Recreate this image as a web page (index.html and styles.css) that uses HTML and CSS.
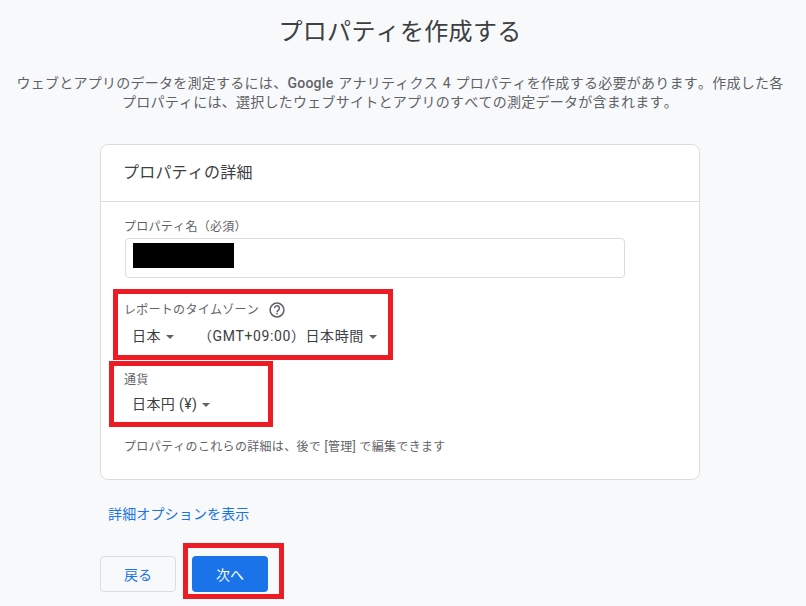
FILE: index.html
```html
<!DOCTYPE html>
<html lang="ja">
<head>
<meta charset="utf-8">
<title>プロパティを作成する</title>
<link rel="stylesheet" href="styles.css">
</head>
<body>
<main class="page">
  <h1 class="title">プロパティを作成する</h1>
  <p class="intro">ウェブとアプリのデータを測定するには、<span class="brand">Google</span> アナリティクス 4 プロパティを作成する必要があります。作成した各<br>プロパティには、選択したウェブサイトとアプリのすべての測定データが含まれます。</p>
  <section class="card">
    <h2 class="card-head">プロパティの詳細</h2>
    <div class="card-body">
      <div class="label label-name">プロパティ名（必須）</div>
      <div class="input"><span class="redact"></span></div>
      <div class="label label-tz">レポートのタイムゾーン
        <svg class="help" viewBox="0 0 24 24" width="18" height="18"><circle cx="12" cy="12" r="9.2" fill="none" stroke="#5f6368" stroke-width="2"/><path d="M8.8 9.6a3.2 3.2 0 1 1 5.2 2.5c-1.2.9-2 1.4-2 2.9" fill="none" stroke="#5f6368" stroke-width="2"/><rect x="11" y="16" width="2" height="2" fill="#5f6368"/></svg>
      </div>
      <div class="selects">
        <span class="select select-country">日本<i class="caret"></i></span>
        <span class="select select-zone">（GMT+09:00）日本時間<i class="caret"></i></span>
      </div>
      <div class="label label-cur">通貨</div>
      <div class="selects selects-cur">
        <span class="select">日本円 (¥)<i class="caret"></i></span>
      </div>
      <p class="note">プロパティのこれらの詳細は、後で [管理] で編集できます</p>
    </div>
  </section>
  <a class="more" href="#">詳細オプションを表示</a>
  <div class="actions">
    <button class="btn btn-back">戻る</button>
    <button class="btn btn-next">次へ</button>
  </div>
</main>
<div class="mark mark-tz"></div>
<div class="mark mark-cur"></div>
<div class="mark mark-next"></div>
</body>
</html>
```
FILE: styles.css
```css
* { box-sizing: border-box; }
html, body { margin: 0; height: 100%; }
body {
  width: 806px; height: 606px; overflow: hidden; position: relative;
  background: #f8f9fa; color: #5f6368;
  font-family: Roboto, "Noto Sans CJK JP", sans-serif;
  font-kerning: none;
}
.page { width: 800px; display: flex; flex-direction: column; padding: 0 100px; }
.title { margin: 16px -100px 0; text-align: center; font-size: 24px; line-height: 32px; font-weight: 400; letter-spacing: .3px; color: #3c4043; }
.intro { margin: 26px -100px 0; text-align: center; font-size: 14px; line-height: 19px; letter-spacing: .26px; word-spacing: 1px; color: #5f6368; }
.brand { font-weight: 500; }
.card { margin-top: 32px; width: 600px; height: 336px; background: #fff; border: 1px solid #dadce0; border-radius: 8px; }
.card-head { margin: 0; height: 57px; padding: 0 22px 4px; display: flex; align-items: center; font-size: 16px; font-weight: 400; letter-spacing: .2px; color: #3c4043; border-bottom: 1px solid #dadce0; }
.card-body { padding: 14px 24px 0; }
.label { font-size: 12px; line-height: 18px; letter-spacing: .28px; color: #5f6368; display: flex; align-items: center; gap: 9px; margin-left: -1px; }
.label-name { margin-top: 2px; }
.input { margin-top: 2px; width: 500px; height: 40px; background: #fff; border: 1px solid #dadce0; border-radius: 4px; padding: 4px 7px; }
.redact { display: block; width: 101px; height: 25px; background: #000; }
.label-tz { margin-top: 23px; height: 18px; }
.selects { display: flex; gap: 22px; margin-top: 7px; padding-left: 7px; font-size: 14px; line-height: 20px; letter-spacing: .4px; color: #3c4043; }
.select { display: inline-flex; align-items: center; }
.select-country { width: 44px; flex: none; }
.select-zone { letter-spacing: .6px; }
.caret { display: inline-block; margin-left: 5px; margin-top: 2px; border-left: 4px solid transparent; border-right: 4px solid transparent; border-top: 4px solid #5f6368; }
.label-cur { margin-top: 25px; }
.selects-cur { margin-top: 5px; }
.note { margin: 24px 0 0 -1px; font-size: 12px; line-height: 18px; letter-spacing: .32px; color: #5f6368; }
.more { margin: 24px 0 0 8px; font-size: 14px; line-height: 20px; letter-spacing: .15px; color: #1a73e8; text-decoration: none; }
.actions { display: flex; gap: 16px; margin-top: 32px; }
.btn { width: 76px; height: 36px; border-radius: 4px; font: inherit; font-size: 14px; padding: 0; }
.btn-back { background: transparent; border: 1px solid #dadce0; color: #1a73e8; }
.btn-next { background: #1a73e8; border: 0; color: #fff; }
.mark { position: absolute; border: 5px solid #ed1c24; }
.mark-tz { left: 113px; top: 289px; width: 280px; height: 71px; }
.mark-cur { left: 109px; top: 361px; width: 164px; height: 66px; }
.mark-next { left: 183px; top: 543px; width: 101px; height: 56px; }
```
